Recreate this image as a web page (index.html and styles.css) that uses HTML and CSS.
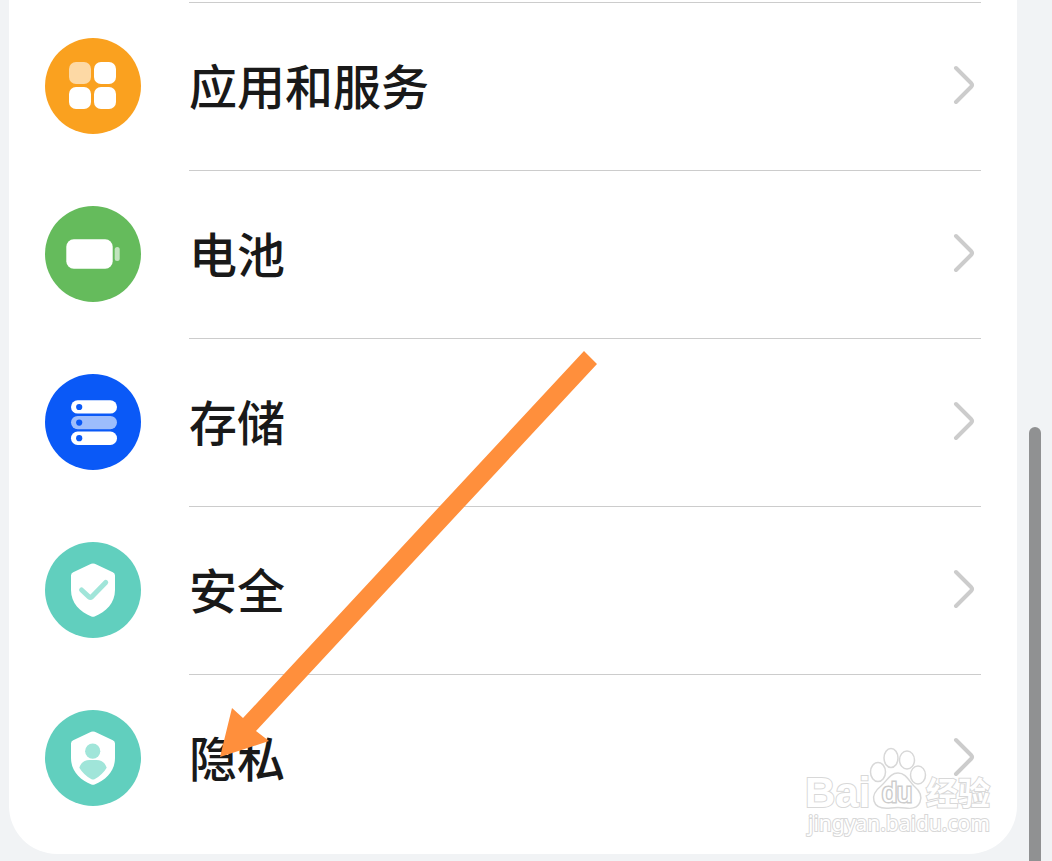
FILE: index.html
```html
<!DOCTYPE html>
<html lang="zh-CN">
  <head>
    <meta charset="UTF-8" />
    <meta name="viewport" content="width=device-width, initial-scale=1.0" />
    <title>设置</title>
    <link rel="stylesheet" href="styles.css">
  </head>
  <body>
    <main class="card">
      <a class="row" href="#apps">
        <svg class="icon" viewBox="0 0 96 96" aria-hidden="true">
          <circle cx="48" cy="48" r="48" fill="#faa11f" />
          <rect x="24" y="24" width="22" height="22" rx="7" fill="#fdd9a5" />
          <rect x="49" y="24" width="22" height="22" rx="7" fill="#fff" />
          <rect x="24" y="49" width="22" height="22" rx="7" fill="#fff" />
          <rect x="49" y="49" width="22" height="22" rx="7" fill="#fff" />
        </svg>
        <span class="row-body">
          <span class="label">应用和服务</span>
          <svg class="chevron" viewBox="0 0 22 40" aria-hidden="true"><path d="M3 3 L18 18 Q20 20 18 22 L3 37" /></svg>
        </span>
      </a>

      <a class="row" href="#battery">
        <svg class="icon" viewBox="0 0 96 96" aria-hidden="true">
          <circle cx="48" cy="48" r="48" fill="#65bb5c" />
          <rect x="21.3" y="33.3" width="46.4" height="29.4" rx="7.5" fill="#fff" />
          <rect x="69.7" y="41" width="5" height="14" rx="2.5" fill="#c1e4be" />
        </svg>
        <span class="row-body">
          <span class="label">电池</span>
          <svg class="chevron" viewBox="0 0 22 40" aria-hidden="true"><path d="M3 3 L18 18 Q20 20 18 22 L3 37" /></svg>
        </span>
      </a>

      <a class="row" href="#storage">
        <svg class="icon" viewBox="0 0 96 96" aria-hidden="true">
          <circle cx="48" cy="48" r="48" fill="#0a59f7" />
          <rect x="26" y="26.2" width="46" height="13.4" rx="6.7" fill="#fff" />
          <rect x="26" y="41.9" width="46" height="13.4" rx="6.7" fill="#9dbdfc" />
          <rect x="26" y="57.5" width="46" height="13.4" rx="6.7" fill="#fff" />
          <circle cx="34.2" cy="33" r="3.1" fill="#0a59f7" />
          <circle cx="34.2" cy="48.6" r="3.1" fill="#0a59f7" />
          <circle cx="34.2" cy="64.2" r="3.1" fill="#0a59f7" />
        </svg>
        <span class="row-body">
          <span class="label">存储</span>
          <svg class="chevron" viewBox="0 0 22 40" aria-hidden="true"><path d="M3 3 L18 18 Q20 20 18 22 L3 37" /></svg>
        </span>
      </a>

      <a class="row" href="#security">
        <svg class="icon" viewBox="0 0 96 96" aria-hidden="true">
          <circle cx="48" cy="48" r="48" fill="#61cfbe" />
          <path d="M46.2 21.8 Q48 21 49.8 21.8 L67.8 30.2 Q70 31.2 70 33.5 V48 C70 61 61 70 49.6 74.5 Q48 75 46.4 74.5 C35 70 26 61 26 48 V33.5 Q26 31.2 28.2 30.2 Z" fill="#fff" />
          <path d="M36.6 48 L44 54.8 Q45.4 56 46.8 54.8 L60.7 40.4" fill="none" stroke="#a0e5d9" stroke-width="5" stroke-linecap="round" stroke-linejoin="round" />
        </svg>
        <span class="row-body">
          <span class="label">安全</span>
          <svg class="chevron" viewBox="0 0 22 40" aria-hidden="true"><path d="M3 3 L18 18 Q20 20 18 22 L3 37" /></svg>
        </span>
      </a>

      <a class="row" href="#privacy">
        <svg class="icon" viewBox="0 0 96 96" aria-hidden="true">
          <circle cx="48" cy="48" r="48" fill="#61cfbe" />
          <path d="M46.2 21.8 Q48 21 49.8 21.8 L67.8 30.2 Q70 31.2 70 33.5 V48 C70 61 61 70 49.6 74.5 Q48 75 46.4 74.5 C35 70 26 61 26 48 V33.5 Q26 31.2 28.2 30.2 Z" fill="#fff" />
          <circle cx="47.7" cy="41.2" r="7.6" fill="#a0e5d9" />
          <path d="M34.3 57.8 C36 52.5 39.5 50 44.5 50 H51.5 C56.5 50 60 52.5 61.7 57.8 Q57 65.5 49.5 69.2 Q48 70 46.5 69.2 Q39 65.5 34.3 57.8 Z" fill="#a0e5d9" />
        </svg>
        <span class="row-body">
          <span class="label">隐私</span>
          <svg class="chevron" viewBox="0 0 22 40" aria-hidden="true"><path d="M3 3 L18 18 Q20 20 18 22 L3 37" /></svg>
        </span>
      </a>

      <svg class="arrow" viewBox="215 345 385 420" aria-hidden="true">
        <path d="M584 351 L597 364 L256 731 L269 741 L220 757 L232 708 L243 718 Z" fill="#ff8f3c" />
      </svg>

      <svg class="watermark" viewBox="800 740 200 100" role="img" aria-label="Baidu经验">
        <text class="mark-latin" x="805" y="807">Bai</text>
        <ellipse cx="878" cy="772" rx="7.5" ry="9.5" />
        <ellipse cx="891" cy="758" rx="7" ry="9.5" />
        <ellipse cx="907" cy="760" rx="7.5" ry="9" />
        <ellipse cx="918" cy="775" rx="7.5" ry="9" />
        <path d="M898 773 C906 773 909 781 914 786 C920 791 922 797 920 802 C918 808 911 809 905 808 Q898 807 891 808 C883 809 876 808 874 801 C872 795 876 790 881 786 C887 781 890 773 898 773 Z" />
        <text class="mark-du" x="882" y="802">du</text>
        <text class="mark-cn" x="926" y="805">经验</text>
        <text class="mark-url" x="808" y="831">jingyan.baidu.com</text>
      </svg>
    </main>
    <div class="scrollbar"></div>
  </body>
</html>
```
FILE: styles.css
```css
* {
  box-sizing: border-box;
}
body {
  margin: 0;
  padding: 0 35px 0 9px;
  background-color: #f1f3f5;
  font-family: "Noto Sans CJK SC", sans-serif;
}
.card {
  position: relative;
  padding: 2px 36px 12px;
  background: white;
  border-radius: 0 0 48px 48px;
}
.row {
  display: flex;
  align-items: center;
  gap: 48px;
  min-height: 168px;
  color: #191919;
  text-decoration: none;
}
.icon {
  flex: none;
  width: 96px;
  height: 96px;
}
.row-body {
  display: flex;
  flex: 1;
  align-items: center;
  align-self: stretch;
  justify-content: space-between;
  padding: 0 6px 3px 0;
  border-top: 1px solid #cccccc;
}
.label {
  padding-bottom: 3px;
  font-size: 48px;
  font-weight: 500;
  line-height: 72px;
}
.chevron {
  width: 22px;
  height: 40px;
  fill: none;
  stroke: #cccccc;
  stroke-width: 4;
  stroke-linecap: round;
}
.arrow {
  position: absolute;
  top: 345px;
  left: 206px;
  width: 385px;
  height: 420px;
  pointer-events: none;
}
.watermark {
  position: absolute;
  right: 17px;
  bottom: 14px;
  width: 200px;
  height: 100px;
  fill: white;
  stroke: #d8d8d8;
  stroke-width: 1.5;
  pointer-events: none;
}
.watermark text {
  paint-order: stroke;
  stroke-width: 2;
}
.mark-latin {
  font: bold 42px "Liberation Sans", sans-serif;
}
.watermark .mark-du {
  font: 27px "Liberation Sans", sans-serif;
  stroke: #cccccc;
  stroke-width: 3;
}
.mark-cn {
  font: bold 32px "Noto Sans CJK SC", sans-serif;
}
.mark-url {
  font: 21px "Noto Sans", sans-serif;
}
.scrollbar {
  position: fixed;
  top: 427px;
  right: 11px;
  bottom: 0;
  width: 12px;
  background: #909192;
  border-radius: 6px 6px 0 0;
}
```
